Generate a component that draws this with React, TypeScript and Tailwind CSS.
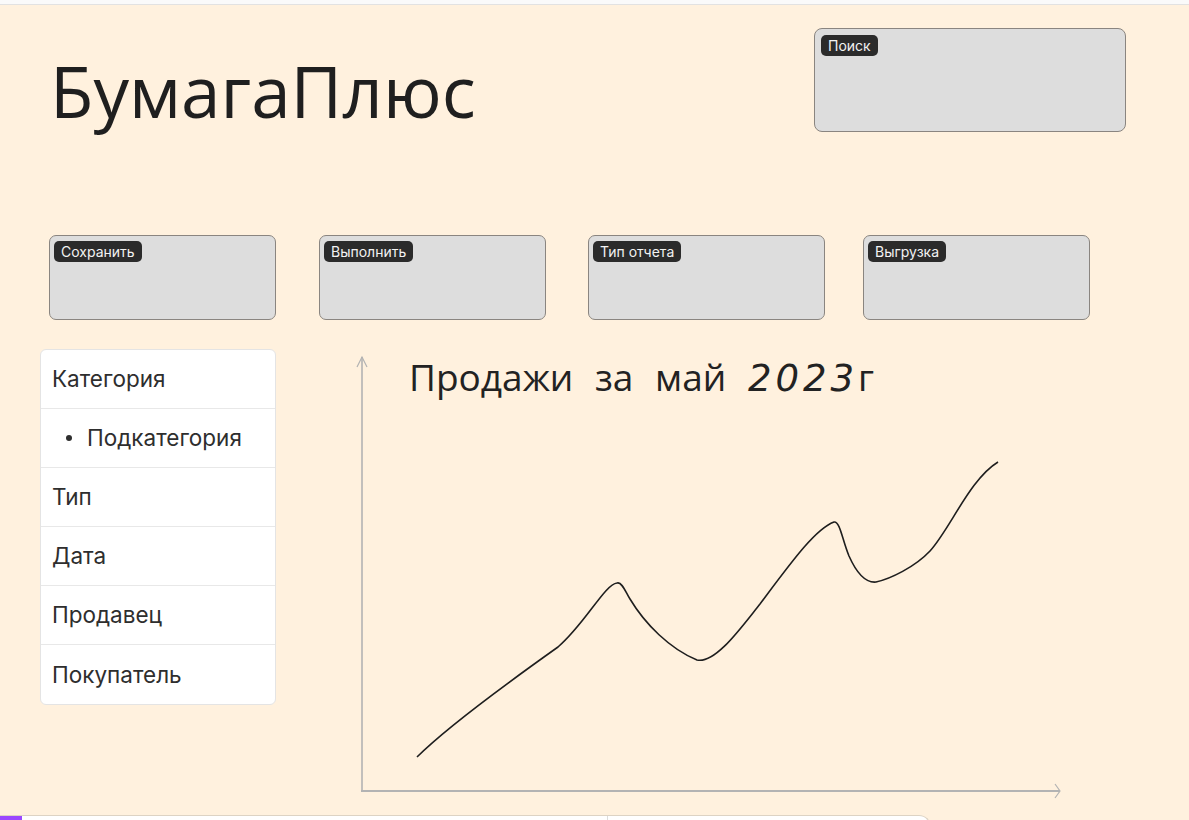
import React from "react";

const Label = ({ text }: { text: string }) => (
  <div className="flex">
    <span
      className="block h-[21px] rounded-[5px] bg-[#2b2b2b] px-[7px] text-[14px] leading-[21px] text-[#f2f2f2]"
      style={{ fontFamily: "Inter, 'Liberation Sans', sans-serif" }}
    >
      {text}
    </span>
  </div>
);

const Box = ({ text, className }: { text: string; className: string }) => (
  <div className={`h-[85px] rounded-[7px] border border-[#8a8580] bg-[#dddddd] pl-[4px] pt-[5px] ${className}`}>
    <Label text={text} />
  </div>
);

export default function App() {
  const items = ["Категория", "Подкатегория", "Тип", "Дата", "Продавец", "Покупатель"];
  return (
    <div className="flex h-[820px] w-full flex-col overflow-hidden bg-[#fff1de]">
      <div className="h-[5px] shrink-0 border-b border-[#e2e2e2] bg-[#fafafa]" />
      <div className="h-[810px] shrink-0 bg-[#fff1de]">
        {/* header */}
        <div className="flex items-start pt-[23px] pl-[50px] pr-[63px]">
          <h1
            className="mt-[27px] text-[71px] leading-[71px] text-[#1f1f1f]"
            style={{ fontFamily: "'Open Sans', sans-serif" }}
          >
            БумагаПлюс
          </h1>
          <div className="ml-auto h-[104px] w-[312px] rounded-[8px] border border-[#8a8580] bg-[#dddddd] pl-[6px] pt-[6px]">
            <Label text="Поиск" />
          </div>
        </div>
        {/* buttons */}
        <div className="mt-[103px] flex pl-[49px]">
          <Box text="Сохранить" className="w-[227px]" />
          <Box text="Выполнить" className="ml-[43px] w-[227px]" />
          <Box text="Тип отчета" className="ml-[42px] w-[237px]" />
          <Box text="Выгрузка" className="ml-[38px] w-[227px]" />
        </div>
        {/* content */}
        <div className="mt-[29px] flex items-start">
          <ul
            className="ml-[40px] w-[236px] overflow-hidden rounded-[6px] border border-[#e4e4e4] bg-white text-[22.5px] text-[#2e2e2e]"
            style={{ fontFamily: "Inter, 'Noto Sans', sans-serif" }}
          >
            {items.map((t, i) => (
              <li
                key={t}
                className={`flex h-[59px] items-center border-[#e8e8e8] ${i < items.length - 1 ? "border-b" : ""} ${i === 1 ? "pl-[25px]" : "pl-[11px]"}`}
              >
                {i === 1 && <span className="mr-[15px] inline-block h-[6px] w-[6px] rounded-full bg-[#2e2e2e]" />}
                {t}
              </li>
            ))}
          </ul>
          <div className="relative ml-[54px] h-[455px] w-[750px]">
            <svg width="750" height="455" viewBox="330 350 750 455" className="block">
              <g stroke="#b3b3b3" strokeWidth="2" fill="none">
                <line x1="362" y1="358" x2="362" y2="792" strokeWidth="1.6" />
                <polyline points="357,368 362,358 367,368" strokeWidth="1.2" />
                <line x1="361" y1="792" x2="1060" y2="792" />
                <polyline points="1055,785 1060,792 1055,799" strokeWidth="1.2" />
              </g>
              <path
                d="M417,758 C450,725 520,675 558,648 C585,625 605,585 617,584 C622,582 626,594 630,600 C645,625 670,650 697,661 C715,665 740,630 760,605 C790,565 815,530 834,523 C840,522 842,540 849,557 C857,575 866,584 876,583 C890,580 915,568 930,552 C950,530 970,480 998,463"
                fill="none"
                stroke="#1e1e1e"
                strokeWidth="1.6"
              />
            </svg>
            <div
              className="absolute left-[79px] top-[9px] whitespace-nowrap text-[37px] leading-[37px] text-[#222]"
              style={{ fontFamily: "'Open Sans', sans-serif", wordSpacing: "12px" }}
            >
              Продажи за май <span className="italic tracking-[4px]" style={{ fontFamily: "'DejaVu Sans', sans-serif" }}>2023</span>г
            </div>
          </div>
        </div>
      </div>
      <div className="relative flex h-[40px] w-[931px] shrink-0 overflow-hidden rounded-tr-[12px] border-t border-r border-[#ddd3c4] bg-white">
        <div className="h-full w-[22px] bg-[#9b47ff]" />
        <div className="ml-[585px] h-full w-px bg-[#dcdcdc]" />
      </div>
    </div>
  );
}
